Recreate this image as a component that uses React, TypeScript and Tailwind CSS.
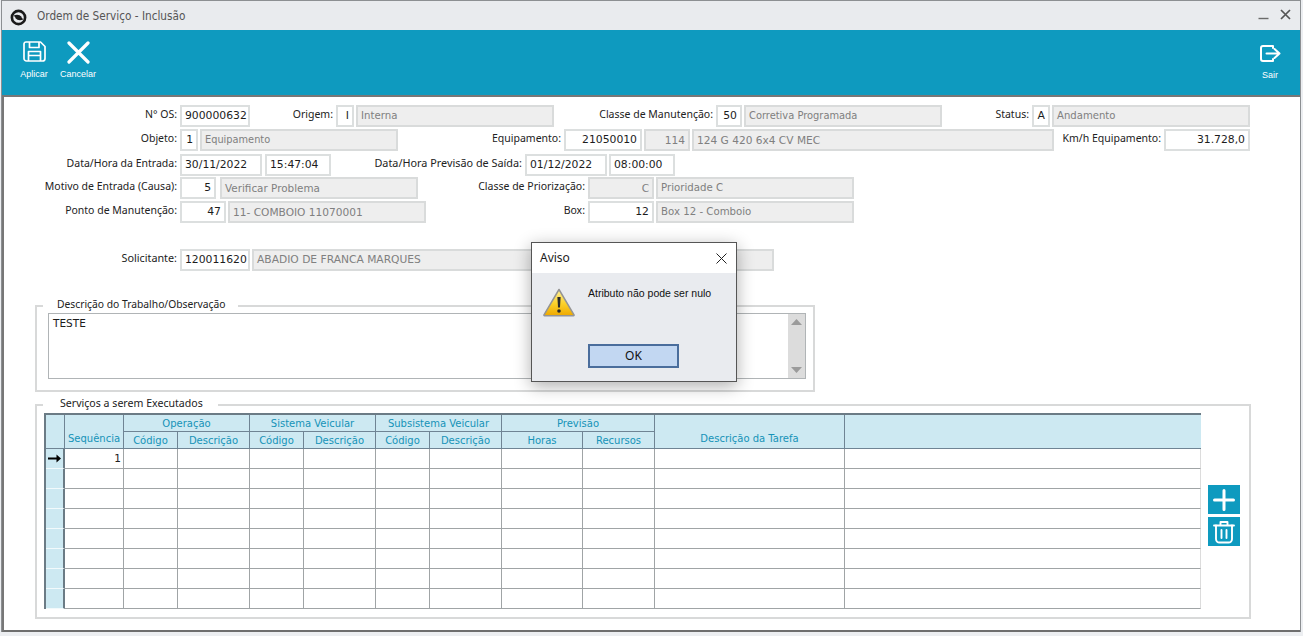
import React from "react";

const labFont = "font-['Noto_Sans',sans-serif] leading-[14px] text-[#222]";
const lab = `${labFont} text-[10.5px]`;
const cellFont = "font-['DejaVu_Sans',sans-serif]";

function Label({ className, children, size = "text-[10.5px]" }: { className: string; children: React.ReactNode; size?: string }) {
  return <div className={`${labFont} ${size} ${className} shrink-0 pr-[3px] pt-[2px] text-right whitespace-nowrap`}>{children}</div>;
}

function In({ className, right, children }: { className: string; right?: boolean; children?: React.ReactNode }) {
  return (
    <div
      className={`${cellFont} text-[10.8px] leading-[14px] ${className} h-[22px] shrink-0 border-2 border-[#dcdfdf] bg-white text-[#1c1c1c] px-[3px] pb-px flex items-center overflow-hidden whitespace-nowrap ${right ? "justify-end" : ""}`}
    >
      {children}
    </div>
  );
}

function Ro({ className, right, children }: { className: string; right?: boolean; children?: React.ReactNode }) {
  return (
    <div
      className={`${cellFont} leading-[14px] ${className} h-[22px] shrink-0 border-2 border-[#d9dbdb] bg-[#eeeeee] text-[#808080] px-[3px] pb-px flex items-center overflow-hidden whitespace-nowrap ${right ? "justify-end" : ""}`}
    >
      {children}
    </div>
  );
}

function Head({ children, className = "" }: { children?: React.ReactNode; className?: string }) {
  return (
    <div
      className={`bg-[#cde9f2] border-r border-b border-[#6f8494] flex justify-center text-[#1593b8] ${cellFont} text-[10px] whitespace-nowrap ${className}`}
    >
      {children}
    </div>
  );
}

function Grid() {
  const rows = Array.from({ length: 8 });
  const cols = Array.from({ length: 11 });
  return (
    <div className="w-[1157px] h-[196px] border-t-2 border-l-2 border-[#6b7b85]">
      <div className="grid grid-cols-[19px_59px_54px_72px_54px_72px_54px_72px_81px_72px_190px_356px] grid-rows-[17px_17px_repeat(8,20px)]">
        <Head className="col-[1] row-[1/3]" />
        <Head className="col-[2] row-[1/3] items-end pb-[2px]">Sequência</Head>
        <Head className="col-[3/5] row-[1] items-center">Operação</Head>
        <Head className="col-[3] row-[2] items-center">Código</Head>
        <Head className="col-[4] row-[2] items-center">Descrição</Head>
        <Head className="col-[5/7] row-[1] items-center">Sistema Veicular</Head>
        <Head className="col-[5] row-[2] items-center">Código</Head>
        <Head className="col-[6] row-[2] items-center">Descrição</Head>
        <Head className="col-[7/9] row-[1] items-center">Subsistema Veicular</Head>
        <Head className="col-[7] row-[2] items-center">Código</Head>
        <Head className="col-[8] row-[2] items-center">Descrição</Head>
        <Head className="col-[9/11] row-[1] items-center">Previsão</Head>
        <Head className="col-[9] row-[2] items-center">Horas</Head>
        <Head className="col-[10] row-[2] items-center">Recursos</Head>
        <Head className="col-[11] row-[1/3] items-end pb-[2px]">Descrição da Tarefa</Head>
        <Head className="col-[12] row-[1/3] border-r-0" />
        {rows.map((_, r) => (
          <React.Fragment key={r}>
            <div className="bg-[#cde9f2] border-r-2 border-b border-b-[#f2fafc] border-r-[#6b7b85] flex items-center justify-center">
              {r === 0 && (
                <svg width="13" height="9" viewBox="0 0 13 9">
                  <path d="M0 3.5h8.5V.5L13 4.5 8.5 8.5v-3H0z" fill="#000" />
                </svg>
              )}
            </div>
            {cols.map((_, c) => (
              <div
                key={c}
                className={`bg-white border-b border-[#a0a4a6] ${c === 10 ? "border-r border-r-[#dcdcdc]" : "border-r"} ${cellFont} text-[10.5px] text-[#222] flex items-center justify-end pr-[2px]`}
              >
                {r === 0 && c === 0 ? "1" : ""}
              </div>
            ))}
          </React.Fragment>
        ))}
      </div>
    </div>
  );
}

function Warning() {
  return (
    <svg width="32" height="29" viewBox="0 0 32 29">
      <defs>
        <linearGradient id="wg" x1="0" y1="0" x2="0" y2="1">
          <stop offset="0" stopColor="#fff09a" />
          <stop offset="0.55" stopColor="#fbd028" />
          <stop offset="1" stopColor="#eea800" />
        </linearGradient>
      </defs>
      <path d="M16 1.5 31 26.8a.6.6 0 0 1-.5.9H1.5a.6.6 0 0 1-.5-.9z" fill="url(#wg)" stroke="#949494" strokeWidth="1.5" strokeLinejoin="round" />
      <path d="M14.4 9h3.2l-.6 10.5h-2z" fill="#2a2a2a" />
      <circle cx="16" cy="23" r="1.8" fill="#2a2a2a" />
    </svg>
  );
}

export default function App() {
  return (
    <div className="relative w-[1303px] h-[636px] overflow-hidden bg-[#eceef1] font-['Noto_Sans',sans-serif]">
      <div className="w-[1300px] h-[632px] ml-px border-t border-l border-r border-[#8c8f92] flex flex-col">
        <div className="h-[29px] shrink-0 bg-[#e9ebee] flex items-center pl-[8px] pr-[9px] pt-[3px]">
          <svg width="17" height="17" viewBox="0 0 18 18">
            <circle cx="9" cy="9" r="7" fill="none" stroke="#1a1a1a" strokeWidth="2.8" />
            <path d="M4 7 Q9 4.8 12.5 8.6 L6 9.4z M14 11 Q9 13.2 5.5 9.4 L12 8.6z" fill="#1a1a1a" />
          </svg>
          <span className="ml-[10px] text-[11.7px] text-[#555] font-['DejaVu_Sans_Condensed','Noto_Sans',sans-serif]">
            Ordem de Serviço - Inclusão
          </span>
          <div className="ml-auto flex items-center gap-[11px] -mt-[5px]">
            <svg width="11" height="11" viewBox="0 0 11 11"><path d="M0.5 9.5h10" stroke="#6b6b6b" strokeWidth="1.4" /></svg>
            <svg width="11" height="11" viewBox="0 0 11 11"><path d="M1 1l9 9M10 1l-9 9" stroke="#555" strokeWidth="1.7" /></svg>
          </div>
        </div>
        <div className="h-[65px] shrink-0 bg-[#0e9abf] flex text-white font-['Liberation_Sans',sans-serif] text-[9px] leading-[12px]">
          <div className="w-[40px] ml-[12px] flex flex-col items-center pt-[11px]">
            <svg width="23" height="21" viewBox="0 0 23 21" fill="none" stroke="#fff" strokeWidth="1.7" strokeLinejoin="round">
              <path d="M3 1h14.5L22 5.5V17.5a2.5 2.5 0 0 1-2.5 2.5h-16A2.5 2.5 0 0 1 1 17.5v-14.5a2 2 0 0 1 2-2z" />
              <path d="M6.5 1v5.5h9.5V1" />
              <path d="M5.5 20v-9.5h12V20M5.5 14.5h12" />
            </svg>
            <span className="mt-[6px]">Aplicar</span>
          </div>
          <div className="w-[44px] ml-[2px] flex flex-col items-center pt-[11px]">
            <svg width="23" height="23" viewBox="0 0 23 23" fill="none" stroke="#fff" strokeWidth="3.2" strokeLinecap="round">
              <path d="M2 2l19 19M21 2 2 21" />
            </svg>
            <span className="mt-[4px]">Cancelar</span>
          </div>
          <div className="ml-auto w-[40px] mr-[10px] flex flex-col items-center pt-[15px]">
            <svg width="21" height="17" viewBox="0 0 21 17" fill="none" stroke="#fff" strokeWidth="2" strokeLinecap="round" strokeLinejoin="round">
              <path d="M13 3V1H3a2 2 0 0 0-2 2v11a2 2 0 0 0 2 2h10v-2" />
              <path d="M6.5 8.5H19.5M14.5 4l5 4.5-5 4.5" />
            </svg>
            <span className="mt-[7px]">Sair</span>
          </div>
        </div>
        <div className="flex-1 bg-white border-t-2 border-t-[#777] border-l-2 border-l-[#777] border-b-2 border-b-[#6e6e6e]">
          <div className="pt-[8px] h-[186px]">
            <div className="flex items-start h-[24px]">
              <Label className="w-[176px]">N° OS:</Label>
              <In className="w-[70px]">900000632</In>
              <Label className="w-[86px]">Origem:</Label>
              <In className="w-[18px]" right>I</In>
              <Ro className="w-[198px] ml-[2px] text-[10.2px]">Interna</Ro>
              <Label className="w-[162px]">Classe de Manutenção:</Label>
              <In className="w-[26px]" right>50</In>
              <Ro className="w-[198px] ml-[2px] text-[9.9px]">Corretiva Programada</Ro>
              <Label className="w-[90px]">Status:</Label>
              <In className="w-[18px]" right>A</In>
              <Ro className="w-[198px] ml-[2px] text-[10.1px]">Andamento</Ro>
            </div>
            <div className="flex items-start h-[25px]">
              <Label className="w-[176px]">Objeto:</Label>
              <In className="w-[18px]" right>1</In>
              <Ro className="w-[198px] ml-[2px] text-[9.8px]">Equipamento</Ro>
              <Label className="w-[166px]">Equipamento:</Label>
              <In className="w-[78px]" right>21050010</In>
              <Ro className="w-[46px] ml-[2px] text-[10.6px]" right>114</Ro>
              <Ro className="w-[362px] ml-[2px] text-[10.6px]">124 G 420 6x4 CV MEC</Ro>
              <Label className="w-[110px]">Km/h Equipamento:</Label>
              <In className="w-[86px]" right>31.728,0</In>
            </div>
            <div className="flex items-start h-[23px]">
              <Label className="w-[176px]">Data/Hora da Entrada:</Label>
              <In className="w-[82px]">30/11/2022</In>
              <In className="w-[66px] ml-[3px]">15:47:04</In>
              <Label className="w-[194px]" size="text-[10.85px]">Data/Hora Previsão de Saída:</Label>
              <In className="w-[82px]">01/12/2022</In>
              <In className="w-[66px] ml-[2px]">08:00:00</In>
            </div>
            <div className="flex items-start h-[24px]">
              <Label className="w-[176px]">Motivo de Entrada (Causa):</Label>
              <In className="w-[36px]" right>5</In>
              <Ro className="w-[198px] ml-[4px] text-[10.4px]">Verificar Problema</Ro>
              <Label className="w-[170px]">Classe de Priorização:</Label>
              <Ro className="w-[66px] text-[10.5px]" right>C</Ro>
              <Ro className="w-[198px] ml-[2px] text-[10.2px]">Prioridade C</Ro>
            </div>
            <div className="flex items-start h-[48px]">
              <Label className="w-[176px]">Ponto de Manutenção:</Label>
              <In className="w-[46px]" right>47</In>
              <Ro className="w-[198px] ml-[2px] text-[10.6px]">11- COMBOIO 11070001</Ro>
              <Label className="w-[162px]">Box:</Label>
              <In className="w-[66px]" right>12</In>
              <Ro className="w-[198px] ml-[2px] text-[10.2px]">Box 12 - Comboio</Ro>
            </div>
            <div className="flex items-start h-[34px]">
              <Label className="w-[176px]" size="text-[10.8px]">Solicitante:</Label>
              <In className="w-[70px]">120011620</In>
              <Ro className="w-[522px] ml-[2px] text-[10.7px]">ABADIO DE FRANCA MARQUES</Ro>
            </div>
          </div>

          <div className="relative ml-[31px] mt-[22px] w-[780px] h-[87px] border-2 border-[#d8d9d9] pl-[11px] pr-[7px] pt-[6px]">
            <div className={`absolute left-[6px] top-[-10px] bg-white pl-[14px] pr-[12px] ${labFont} text-[10.3px] whitespace-nowrap`}>
              Descrição do Trabalho/Observação
            </div>
            <div className="h-[66px] border border-[#b0b4b6] flex bg-white">
              <div className={`flex-1 ${cellFont} text-[10.5px] text-[#1c1c1c] pl-[4px] pt-[2px]`}>TESTE</div>
              <div className="w-[17px] bg-[#dcdcdc] flex flex-col items-center justify-between py-[5px]">
                <svg width="11" height="6" viewBox="0 0 11 6"><path d="M5.5 0 11 6H0z" fill="#9b9b9b" /></svg>
                <svg width="11" height="6" viewBox="0 0 11 6"><path d="M5.5 6 11 0H0z" fill="#9b9b9b" /></svg>
              </div>
            </div>
          </div>

          <div className="relative ml-[31px] mt-[12px] w-[1216px] h-[215px] border-2 border-[#d8d9d9] pl-[7px] pt-[7px] flex">
            <div className={`absolute left-[6px] top-[-10px] bg-white pl-[17px] pr-[15px] ${labFont} text-[10.6px] whitespace-nowrap`}>
              Serviços a serem Executados
            </div>
            <Grid />
            <div className="ml-[7px] mt-[72px] flex flex-col gap-[3px]">
              <div className="w-[32px] h-[29px] bg-[#0e9abf] flex items-center justify-center">
                <svg width="22" height="22" viewBox="0 0 22 22" stroke="#fff" strokeWidth="3" strokeLinecap="round"><path d="M11 1.5v19M1.5 11h19" /></svg>
              </div>
              <div className="w-[32px] h-[29px] bg-[#0e9abf] flex items-center justify-center">
                <svg width="22" height="24" viewBox="0 0 22 24" fill="none" stroke="#fff" strokeWidth="1.9" strokeLinecap="round" strokeLinejoin="round">
                  <path d="M1 5.5h20M7.5 5V2h7v3" />
                  <path d="M3 5.5v13.5a3.5 3.5 0 0 0 3.5 3.5h9a3.5 3.5 0 0 0 3.5-3.5V5.5" />
                  <path d="M8.5 10v8M13.5 10v8" />
                </svg>
              </div>
            </div>
          </div>
        </div>
      </div>

      <div className="absolute left-[531px] top-[242px] w-[206px] h-[140px] border border-[#555] bg-[#e9ebef] shadow-[0_4px_16px_rgba(0,0,0,0.32)] flex flex-col">
        <div className="h-[30px] bg-white flex items-center pl-[8px] pr-[9px] justify-between">
          <span className="text-[12px] text-[#1c1c1c]">Aviso</span>
          <svg width="11" height="11" viewBox="0 0 11 11"><path d="M.5.5l10 10M10.5.5l-10 10" stroke="#222" strokeWidth="1" /></svg>
        </div>
        <div className="flex pl-[11px] pt-[15px]">
          <Warning />
          <span className="ml-[13px] -mt-[2px] text-[10.5px] leading-[14px] text-[#111] font-['Liberation_Sans',sans-serif] whitespace-nowrap">
            Atributo não pode ser nulo
          </span>
        </div>
        <div className="mt-[27px] ml-[56px] w-[91px] h-[24px] bg-[#c2d7f2] border-2 border-[#4a6d9c] flex items-center justify-center text-[12px] text-[#111]">
          OK
        </div>
      </div>
    </div>
  );
}
